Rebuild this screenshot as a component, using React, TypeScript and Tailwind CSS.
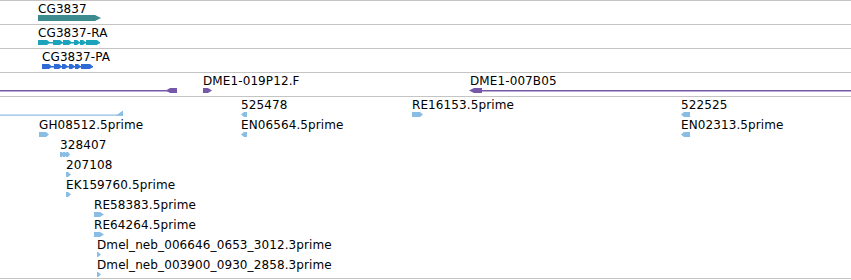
import React from "react";

// genome browser tracks: glyphs drawn in svg, labels as text
const line = "border-[#c4c4c4]";
const font = "[font-family:'DejaVu_Sans',sans-serif]";

type Label = { x: number; y: number; text: string };

function rArrow(x: number, y: number, w: number, h = 5, tip = 3) {
  return `${x},${y} ${x + w - tip},${y} ${x + w},${y + h / 2} ${x + w - tip},${y + h} ${x},${y + h}`;
}

function lArrow(x: number, y: number, w: number, h = 5, tip = 3) {
  return `${x + w},${y} ${x + tip},${y} ${x},${y + h / 2} ${x + tip},${y + h} ${x + w},${y + h}`;
}

function Track({
  top,
  height,
  className,
  labels,
  children,
}: {
  top: number;
  height: number;
  className: string;
  labels: Label[];
  children: React.ReactNode;
}) {
  return (
    <div className={`relative border-t ${line} ${className}`}>
      <svg
        className="absolute left-0 -top-px"
        width={851}
        height={height}
        viewBox={`0 ${top} 851 ${height}`}
      >
        {children}
      </svg>
      {labels.map((l) => (
        <span
          key={l.text}
          className="absolute whitespace-nowrap text-[12px] leading-[12px] tracking-[0.1px] text-black"
          style={{ left: l.x, top: l.y - top }}
        >
          {l.text}
        </span>
      ))}
    </div>
  );
}

const teal = "#3b8b8f";
const cyan = "#1ca3bc";
const blue = "#2f6bd4";
const purple = "#7658a9";
const light = "#89bde4";

const raBlocks: [number, number][] = [
  [38, 50],
  [53, 63],
  [63, 72],
  [74, 80],
  [80, 86],
  [86, 100],
];

const paBlocks: [number, number][] = [
  [42, 52],
  [54, 62],
  [62, 68],
  [69, 75],
  [75, 81],
  [81, 93],
];

const estLabels: Label[] = [
  { x: 39, y: 118, text: "GH08512.5prime" },
  { x: 60, y: 138, text: "328407" },
  { x: 66, y: 158, text: "207108" },
  { x: 66, y: 178, text: "EK159760.5prime" },
  { x: 94, y: 198, text: "RE58383.5prime" },
  { x: 94, y: 218, text: "RE64264.5prime" },
  { x: 97, y: 238, text: "Dmel_neb_006646_0653_3012.3prime" },
  { x: 97, y: 258, text: "Dmel_neb_003900_0930_2858.3prime" },
  { x: 241, y: 98, text: "525478" },
  { x: 241, y: 118, text: "EN06564.5prime" },
  { x: 412, y: 98, text: "RE16153.5prime" },
  { x: 681, y: 98, text: "522525" },
  { x: 681, y: 118, text: "EN02313.5prime" },
];

export default function App() {
  return (
    <div className={`w-[851px] h-[280px] bg-white overflow-hidden ${font}`}>
      <Track top={0} height={24} className="h-[24px]" labels={[{ x: 38, y: 2, text: "CG3837" }]}>
        <polygon points="38,15 95,15 101,18 95,21 38,21" fill={teal} />
      </Track>

      <Track top={24} height={24} className="h-[24px]" labels={[{ x: 38, y: 26, text: "CG3837-RA" }]}>
        <rect x={38} y={42} width={62} height={1.5} fill={cyan} />
        {raBlocks.map(([a, b]) => (
          <polygon key={a} points={rArrow(a, 40, b - a, 5, 3)} fill={cyan} />
        ))}
      </Track>

      <Track top={48} height={24} className="h-[24px]" labels={[{ x: 42, y: 50, text: "CG3837-PA" }]}>
        <rect x={42} y={66} width={51} height={1.5} fill={blue} />
        {paBlocks.map(([a, b]) => (
          <polygon key={a} points={rArrow(a, 64, b - a, 5, 3)} fill={blue} />
        ))}
      </Track>

      <Track
        top={72}
        height={24}
        className="h-[24px]"
        labels={[
          { x: 203, y: 74, text: "DME1-019P12.F" },
          { x: 470, y: 74, text: "DME1-007B05" },
        ]}
      >
        <rect x={0} y={90} width={170} height={1.5} fill={purple} />
        <polygon points={lArrow(166, 88, 11, 5, 4)} fill={purple} />
        <polygon points={rArrow(203, 88, 9, 5, 4)} fill={purple} />
        <rect x={478} y={90} width={373} height={1.5} fill={purple} />
        <polygon points={lArrow(469, 88, 13, 5, 5)} fill={purple} />
      </Track>

      <Track top={96} height={183} className="h-[183px] border-b" labels={estLabels}>
        <rect x={0} y={114.5} width={120} height={1.2} fill={light} />
        <polygon points="116,115.5 123,110.5 123,116" fill={light} />
        <polygon points={rArrow(39, 132, 10, 5, 3)} fill={light} />
        <polygon points={rArrow(60, 152, 4, 5, 2)} fill={light} />
        <polygon points={rArrow(63, 152, 4, 5, 2)} fill={light} />
        <polygon points={rArrow(66, 152, 4, 5, 2)} fill={light} />
        <polygon points={rArrow(66, 172, 5, 5, 3)} fill={light} />
        <polygon points={rArrow(66, 192, 5, 5, 3)} fill={light} />
        <polygon points={rArrow(94, 212, 10, 5, 4)} fill={light} />
        <polygon points={rArrow(94, 232, 10, 5, 4)} fill={light} />
        <polygon points={rArrow(97, 252, 4, 5, 3)} fill={light} />
        <polygon points={rArrow(97, 272, 4, 5, 3)} fill={light} />
        <polygon points={lArrow(241, 112, 6, 5, 3)} fill={light} />
        <polygon points={lArrow(241, 132, 6, 5, 3)} fill={light} />
        <polygon points={rArrow(412, 112, 11, 5, 3)} fill={light} />
        <polygon points={lArrow(681, 112, 9, 5, 3)} fill={light} />
        <polygon points={lArrow(681, 132, 9, 5, 3)} fill={light} />
      </Track>
    </div>
  );
}
